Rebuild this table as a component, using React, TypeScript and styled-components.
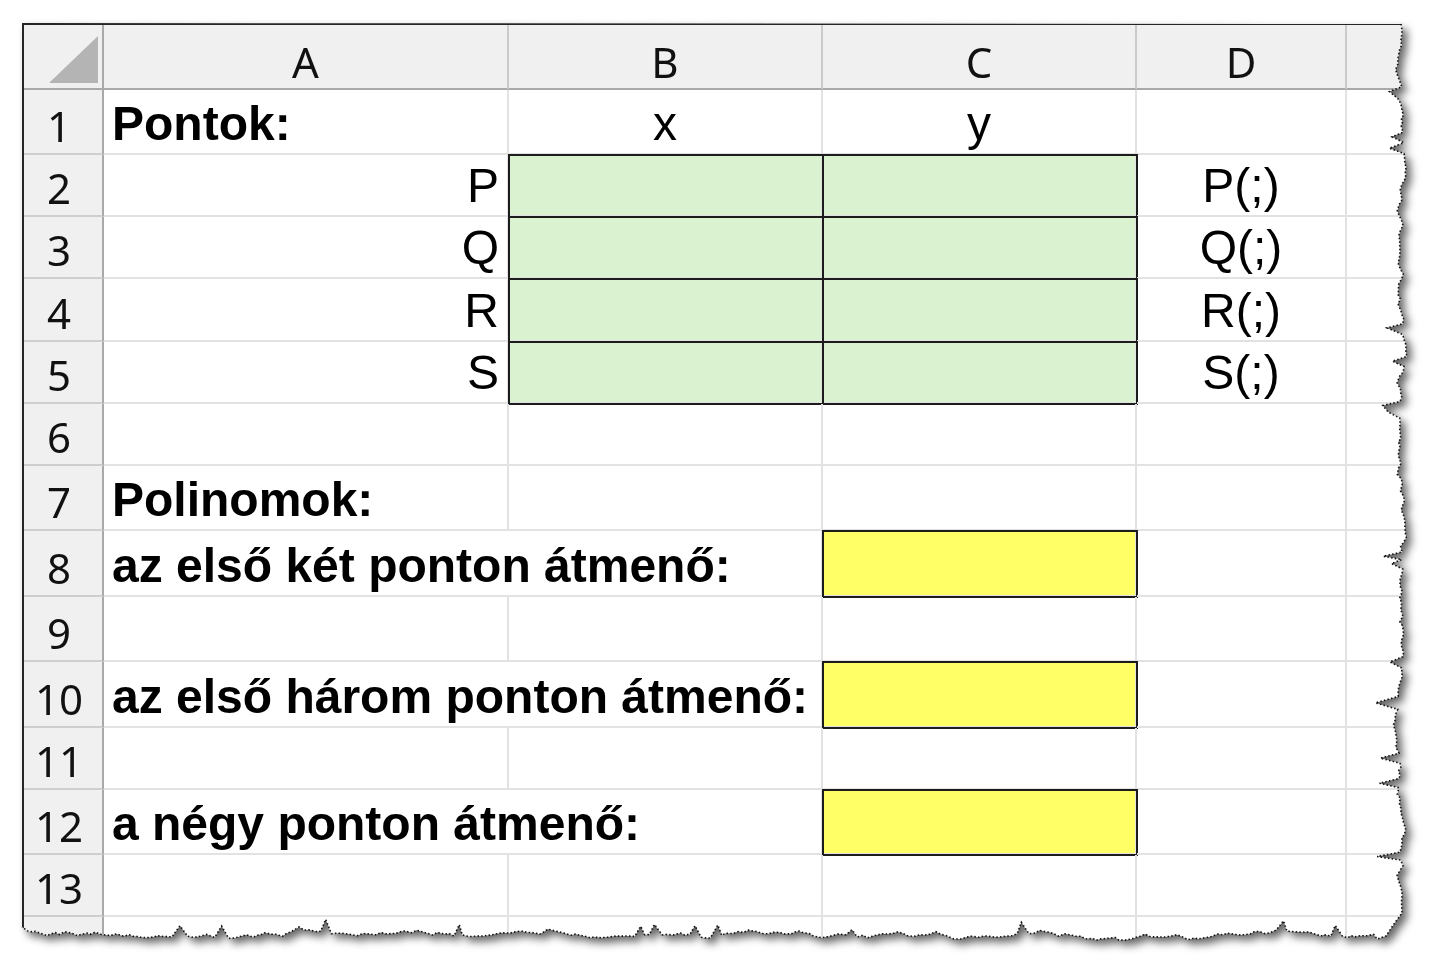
import React, { useMemo } from 'react';
import styled, { createGlobalStyle } from 'styled-components';

const GlobalStyle = createGlobalStyle`
  html, body { margin: 0; padding: 0; background: #ffffff; overflow: hidden; }
  body { font-family: "Liberation Sans", Arial, sans-serif; color: #000; }
  *, *::before, *::after { box-sizing: border-box; }
`;

const ORIGIN_X = 22;
const ORIGIN_Y = 23;
const COLS = [80, 405, 314, 314, 210, 75];
const ROWS = [65, 65, 62, 62, 63, 62, 62, 65, 66, 65, 66, 62, 65, 62, 50];
const COL_LABELS = ['A', 'B', 'C', 'D', ''];

type Fill = 'green' | 'yellow';
type Align = 'left' | 'center' | 'right';
type CellDef = { text?: string; bold?: boolean; align?: Align; fill?: Fill; span?: number };

const E: CellDef = {};
const emptyRow = (): CellDef[] => [E, E, E, E, E];
const pointRow = (p: string): CellDef[] => [
  { text: p, align: 'right' },
  { fill: 'green' },
  { fill: 'green' },
  { text: `${p}(;)`, align: 'center' },
  E,
];
const polyRow = (t: string): CellDef[] => [{ text: t, bold: true, span: 2 }, { fill: 'yellow' }, E, E];

const DATA: { label: string; cells: CellDef[] }[] = [
  { label: '1', cells: [{ text: 'Pontok:', bold: true }, { text: 'x', align: 'center' }, { text: 'y', align: 'center' }, E, E] },
  { label: '2', cells: pointRow('P') },
  { label: '3', cells: pointRow('Q') },
  { label: '4', cells: pointRow('R') },
  { label: '5', cells: pointRow('S') },
  { label: '6', cells: emptyRow() },
  { label: '7', cells: [{ text: 'Polinomok:', bold: true }, E, E, E, E] },
  { label: '8', cells: polyRow('az első két ponton átmenő:') },
  { label: '9', cells: emptyRow() },
  { label: '10', cells: polyRow('az első három ponton átmenő:') },
  { label: '11', cells: emptyRow() },
  { label: '12', cells: polyRow('a négy ponton átmenő:') },
  { label: '13', cells: emptyRow() },
  { label: '', cells: emptyRow() },
];

const Page = styled.div`
  width: 1436px;
  height: 980px;
  padding: ${ORIGIN_Y}px 0 0 ${ORIGIN_X}px;
`;

const Paper = styled.div`
  position: relative;
  width: fit-content;
  filter: drop-shadow(5px 5px 4px rgba(0, 0, 0, 0.6));
`;

const Sheet = styled.div`
  display: grid;
  grid-template-columns: ${COLS.map((c) => `${c}px`).join(' ')};
  grid-template-rows: ${ROWS.map((r) => `${r}px`).join(' ')};
  border-top: 2px solid #262626;
  border-left: 2px solid #262626;
  background: #ffffff;
`;

const HeaderCell = styled.div`
  background: #f0f0f0;
  border-right: 2px solid #cacaca;
  border-bottom: 2px solid #a9a9a9;
  display: flex;
  align-items: flex-end;
  justify-content: center;
  padding-bottom: 6px;
  font-family: "Noto Sans", "Open Sans", sans-serif;
  font-size: 42px;
  line-height: 40px;
  color: #111;
`;

const Corner = styled(HeaderCell)`
  justify-content: flex-end;
  padding: 0 4px 5px 0;
  border-right-color: #a9a9a9;
`;

const Triangle = styled.div`
  width: 49px;
  height: 47px;
  background: #b4b4b4;
  clip-path: polygon(100% 0, 100% 100%, 0 100%);
`;

const RowHead = styled.div`
  background: #f0f0f0;
  border-right: 2px solid #a9a9a9;
  border-bottom: 2px solid #cecece;
  display: flex;
  align-items: flex-end;
  justify-content: center;
  padding: 0 8px 7px 0;
  font-family: "Noto Sans", "Open Sans", sans-serif;
  font-size: 42px;
  line-height: 40px;
  color: #111;
`;

const FILLS: Record<Fill, string> = { green: '#daf2d0', yellow: '#ffff66' };
const JUSTIFY: Record<Align, string> = { left: 'flex-start', center: 'center', right: 'flex-end' };

const Cell = styled.div<{ $align: Align; $bold: boolean; $fill?: Fill; $span: number }>`
  grid-column: span ${(p) => p.$span};
  border-right: 2px solid #e2e2e2;
  border-bottom: 2px solid #e2e2e2;
  display: flex;
  align-items: flex-end;
  justify-content: ${(p) => JUSTIFY[p.$align]};
  padding: 0 8px 2px;
  min-width: 0;
  white-space: nowrap;
  font-family: "Liberation Sans", Arial, sans-serif;
  font-size: 48px;
  font-weight: ${(p) => (p.$bold ? 700 : 400)};
  color: #000;
  background: ${(p) => (p.$fill ? FILLS[p.$fill] : 'transparent')};
  outline: ${(p) => (p.$fill ? '2px solid #1c1c1c' : 'none')};
  outline-offset: -1px;
`;

const EdgeSvg = styled.svg`
  position: absolute;
  left: 0;
  top: 0;
  overflow: visible;
  pointer-events: none;
`;

function makeEdge(): [number, number][] {
  let s = 987654321;
  const r = () => {
    s = (s * 48271) % 2147483647;
    return s / 2147483647;
  };
  const pts: [number, number][] = [[1401, 24]];
  let y = 24;
  let off = 0;
  while (y < 900) {
    y += 3 + r() * 4;
    off += (r() - 0.5) * 7;
    off *= 0.8;
    let px = 1400 + off;
    if (r() < 0.07) px -= 8 + r() * 14;
    pts.push([px, y]);
  }
  pts.push([1402, 913]);
  pts.push([1394, 924]);
  pts.push([1386, 936]);
  pts.push([1377, 939]);
  let x = 1377;
  off = 0;
  while (x > 32) {
    x -= 3 + r() * 5;
    off += (r() - 0.5) * 6;
    off *= 0.85;
    let py = 934 + off;
    if (r() < 0.06) py -= 6 + r() * 7;
    pts.push([x, py]);
  }
  pts.push([22, 927]);
  return pts.map(([px, py]) => [px - ORIGIN_X, py - ORIGIN_Y] as [number, number]);
}

export default function App() {
  const edge = useMemo(makeEdge, []);
  const clip = useMemo(
    () => `polygon(0px 0px, ${edge.map(([x, y]) => `${x.toFixed(1)}px ${y.toFixed(1)}px`).join(', ')})`,
    [edge]
  );
  const line = edge.map(([x, y]) => `${x.toFixed(1)},${y.toFixed(1)}`).join(' ');

  return (
    <>
      <GlobalStyle />
      <Page>
        <Paper>
          <Sheet style={{ clipPath: clip }}>
            <Corner>
              <Triangle />
            </Corner>
            {COL_LABELS.map((l, i) => (
              <HeaderCell key={`h${i}`}>{l}</HeaderCell>
            ))}
            {DATA.map((row, ri) => (
              <React.Fragment key={`r${ri}`}>
                <RowHead>{row.label}</RowHead>
                {row.cells.map((c, ci) => (
                  <Cell
                    key={`c${ri}-${ci}`}
                    $align={c.align ?? 'left'}
                    $bold={!!c.bold}
                    $fill={c.fill}
                    $span={c.span ?? 1}
                  >
                    {c.text}
                  </Cell>
                ))}
              </React.Fragment>
            ))}
          </Sheet>
          <EdgeSvg width="1420" height="960">
            <polyline
              points={line}
              fill="none"
              stroke="#111"
              strokeWidth={1.6}
              strokeDasharray="1.5 2.2"
            />
          </EdgeSvg>
        </Paper>
      </Page>
    </>
  );
}
